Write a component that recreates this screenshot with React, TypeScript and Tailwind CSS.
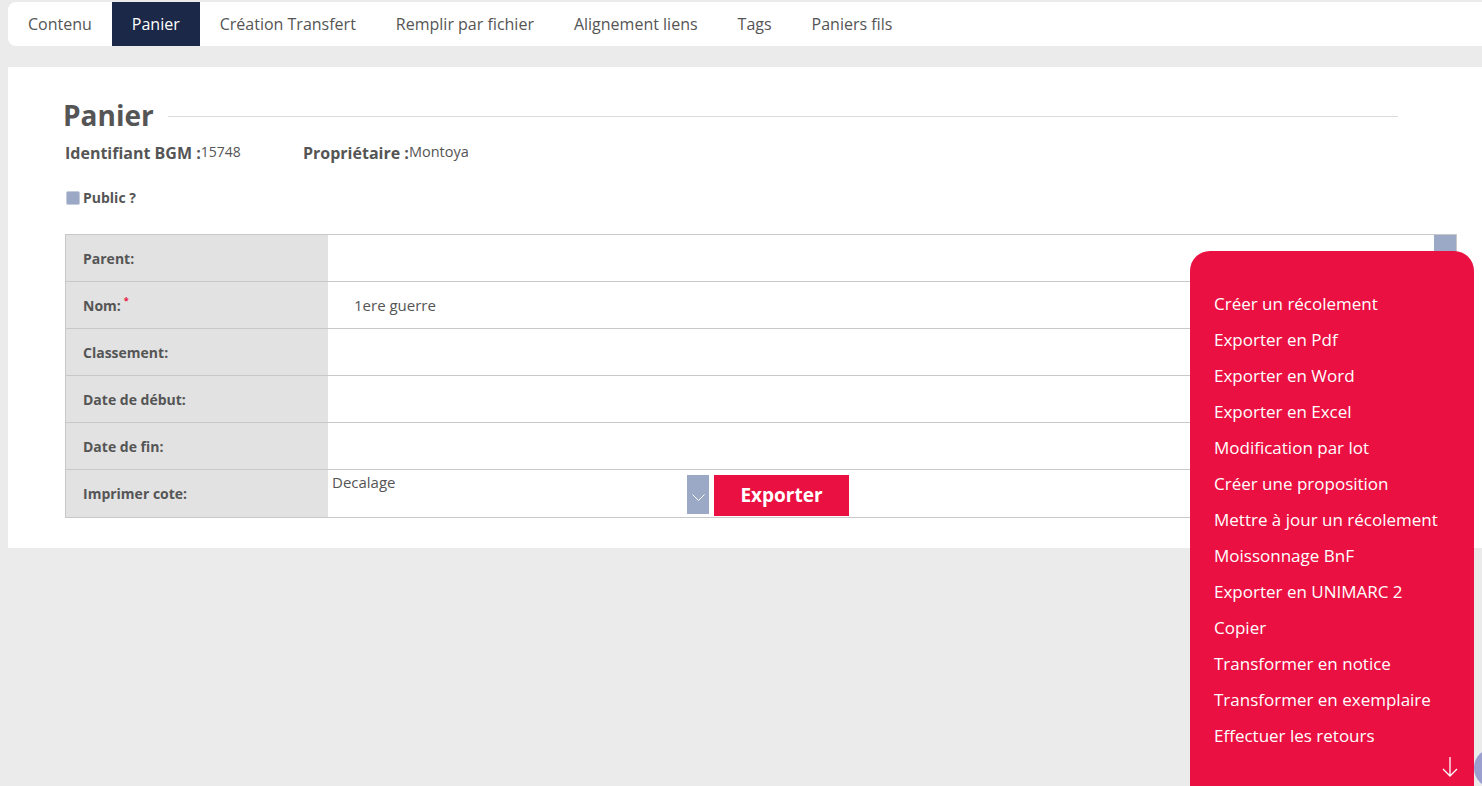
const tabs = [
  "Contenu",
  "Panier",
  "Création Transfert",
  "Remplir par fichier",
  "Alignement liens",
  "Tags",
  "Paniers fils",
];

const actions = [
  "Créer un récolement",
  "Exporter en Pdf",
  "Exporter en Word",
  "Exporter en Excel",
  "Modification par lot",
  "Créer une proposition",
  "Mettre à jour un récolement",
  "Moissonnage BnF",
  "Exporter en UNIMARC 2",
  "Copier",
  "Transformer en notice",
  "Transformer en exemplaire",
  "Effectuer les retours",
];

const font = { fontFamily: "'Open Sans', Lato, sans-serif" };

function Row({
  label,
  required,
  children,
}: {
  label: string;
  required?: boolean;
  children?: React.ReactNode;
}) {
  return (
    <div className="flex h-[47px] border-b border-[#c8c8c8] last:border-b-0">
      <div className="w-[262px] shrink-0 bg-[#e2e2e2] pl-[17px] flex items-center text-[14px] font-bold text-[#555]">
        {label}
        {required && <span className="text-[#ea1041] text-[9px] ml-[3px] -mt-[9px]">*</span>}
      </div>
      <div className="flex-1 bg-white">{children}</div>
    </div>
  );
}

export default function App() {
  return (
    <div className="relative w-[1482px] h-[786px] overflow-hidden bg-[#ebebeb] pt-[2px] pl-2" style={font}>
      {/* Tabs */}
      <div className="h-[44px] bg-white rounded-l-lg flex text-[16px] text-[#555]">
        {tabs.map((t) => (
          <div
            key={t}
            className={
              t === "Panier"
                ? "px-5 flex items-center bg-[#1b2848] text-white"
                : "px-5 flex items-center"
            }
          >
            {t}
          </div>
        ))}
      </div>

      {/* Main panel */}
      <div className="mt-[21px] bg-white h-[481px] pl-[57px] pr-[25px] pt-[30px]">
        <div className="flex items-center h-[36px] mr-[59px] -ml-[2px]">
          <h1 className="text-[28px] font-bold text-[#555] leading-none">Panier</h1>
          <div className="flex-1 h-px bg-[#dcdcdc] ml-[14px] mt-[2px]" />
        </div>

        <div className="flex items-start mt-[8px] text-[#555]">
          <div className="w-[238px] flex items-start">
            <span className="text-[16px] font-bold">Identifiant BGM :</span>
            <span className="text-[14px]">15748</span>
          </div>
          <div className="flex items-start">
            <span className="text-[16px] font-bold">Propriétaire :</span>
            <span className="text-[14.5px]">Montoya</span>
          </div>
        </div>

        <div className="flex items-center mt-[22px] ml-[1px]">
          <span className="w-[14px] h-[14px] bg-[#9ba8c6] border border-[#c4cbdb] rounded-[2px]" />
          <span className="ml-[3px] text-[14px] font-bold text-[#555]">Public ?</span>
        </div>

        <div className="mt-[26px] border border-[#c8c8c8] flex flex-col">
          <Row label="Parent:">
            <div className="flex justify-end h-full">
              <div className="w-[22px] h-[24px] bg-[#9ba8c6]" />
            </div>
          </Row>
          <Row label="Nom:" required>
            <div className="h-full flex items-center pl-[26px] text-[15px] text-[#555]">1ere guerre</div>
          </Row>
          <Row label="Classement:" />
          <Row label="Date de début:" />
          <Row label="Date de fin:" />
          <Row label="Imprimer cote:">
            <div className="flex h-full">
              <div className="w-[359px] pl-[4px] pt-[1px] text-[15px] text-[#555]">Decalage</div>
              <div className="w-[22px] h-[39px] mt-[5px] bg-[#9ba8c6] flex items-center justify-center">
                <svg width="13" height="8" viewBox="0 0 13 8" fill="none" stroke="white" strokeWidth="1" className="mt-[6px]">
                  <path d="M0.5 0.5l6 6 6-6" />
                </svg>
              </div>
              <button className="ml-[5px] mt-[5px] w-[135px] h-[41px] bg-[#ea1041] text-white text-[19px] font-bold">
                Exporter
              </button>
            </div>
          </Row>
        </div>
      </div>

      {/* Action menu */}
      <div className="absolute left-[1190px] top-[251px] w-[284px] h-[560px] bg-[#ea1041] rounded-[20px] pt-[35px] pl-[24px]">
        <ul className="flex flex-col">
          {actions.map((a) => (
            <li key={a} className="h-[36px] flex items-center text-[17px] text-white">
              {a}
            </li>
          ))}
        </ul>
      </div>
      <svg className="absolute left-[1441px] top-[756px]" width="18" height="22" viewBox="0 0 18 22" fill="none" stroke="white" strokeWidth="1.3">
        <path d="M9 1v19M2 13l7 7 7-7" />
      </svg>
      <div className="absolute left-[1474px] top-[748px] w-[40px] h-[40px] rounded-full bg-[#9b9fd0]" />
    </div>
  );
}
